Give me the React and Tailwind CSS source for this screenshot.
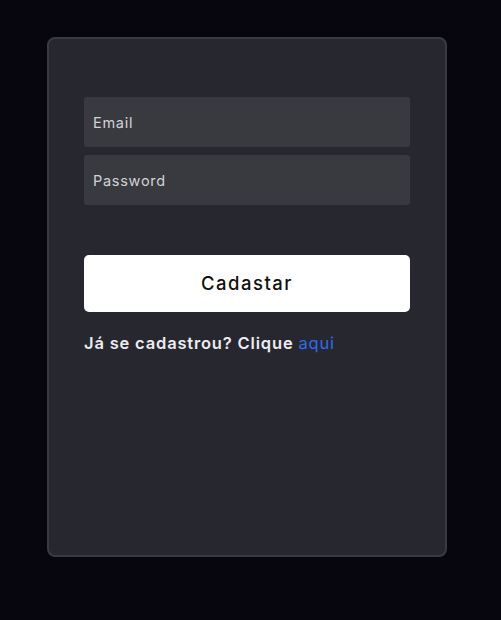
export default function App() {
  return (
    <div className="min-h-[620px] w-full bg-[#07060f] pt-[37px] pl-[47px]" style={{ fontFamily: "Inter, 'Noto Sans', sans-serif" }}>
      <div className="w-[400px] h-[520px] rounded-[8px] border-2 border-[#3a3a41] bg-[#27272f] pt-[58px] px-[35px]">
        <form className="flex flex-col" onSubmit={e => e.preventDefault()}>
          <input
            type="email"
            placeholder="Email"
            className="h-[50px] w-[326px] rounded-[3px] bg-[#393a3f] px-[9px] text-[14.5px] tracking-[0.05em] text-[#e0e0e6] placeholder:text-[#d2d2d8] outline-none"
          />
          <input
            type="password"
            placeholder="Password"
            className="mt-[8px] h-[50px] w-[326px] rounded-[3px] bg-[#393a3f] px-[9px] text-[14.5px] tracking-[0.05em] text-[#e0e0e6] placeholder:text-[#d2d2d8] outline-none"
          />
          <button
            type="submit"
            className="mt-[50px] h-[57px] w-[326px] rounded-[5px] bg-white text-[18.5px] font-medium tracking-[0.08em] text-[#111]"
          >
            Cadastar
          </button>
          <p className="mt-[19px] text-[16.5px] font-semibold tracking-[0.05em] text-[#ececf0]">
            Já se cadastrou? Clique <a href="#" className="font-normal text-[#2d6cf0]">aqui</a>
          </p>
        </form>
      </div>
    </div>
  )
}
